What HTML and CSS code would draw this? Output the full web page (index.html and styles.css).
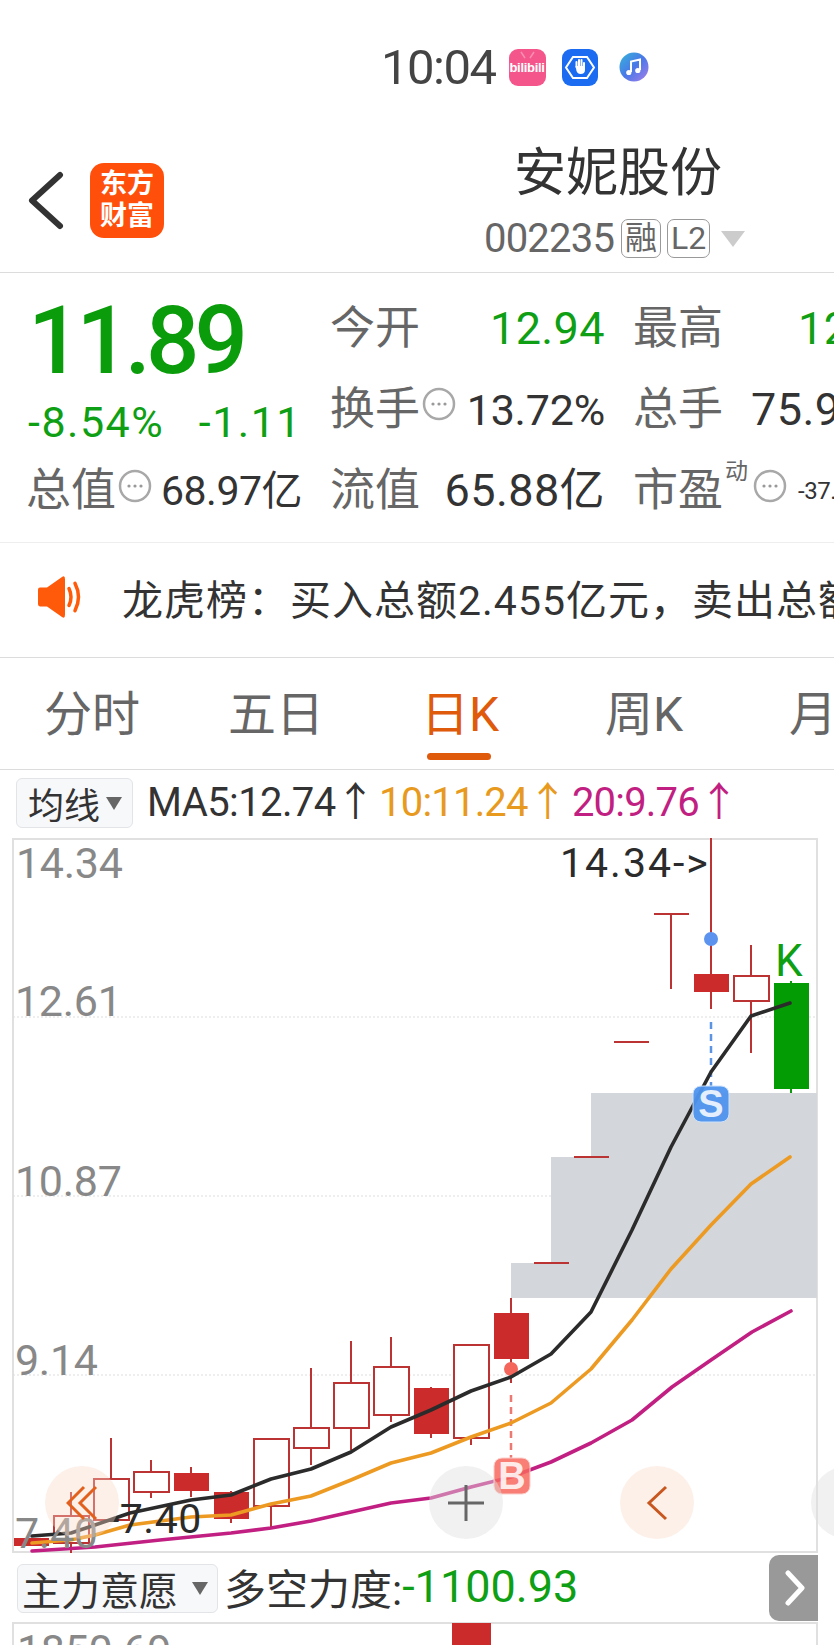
FILE: index.html
```html
<!DOCTYPE html>
<html lang="zh-CN">
<head>
  <meta charset="UTF-8" />
  <meta name="viewport" content="width=device-width, initial-scale=1.0"/>
  <title>安妮股份 002235</title>
  <link rel="stylesheet" href="styles.css">
</head>

<body>

  <svg class="defs" width="0" height="0">
    <symbol id="more" viewBox="0 0 34 34">
      <circle cx="17" cy="17" r="15" fill="none" stroke="#a8a8a8" stroke-width="2.5"/>
      <circle cx="11" cy="17" r="1.6" fill="#999"/>
      <circle cx="17" cy="17" r="1.6" fill="#999"/>
      <circle cx="23" cy="17" r="1.6" fill="#999"/>
    </symbol>
  </svg>

  <!-- status bar -->
  <div class="status">
    <span class="clock">10:04</span>
    <span class="app-bili">
      <svg class="bili-ears" width="37" height="12" viewBox="0 0 37 12"><path d="M12 3l4 6M25 3l-4 6" stroke="#f98fb0" stroke-width="1.5" fill="none"/></svg>
      <span class="bili-text">bilibili</span>
    </span>
    <svg class="app-hand" width="36" height="37" viewBox="0 0 36 37">
      <rect width="36" height="37" rx="9" fill="#1c6cf2"/>
      <path d="M11 8h14l7 10.500-7 10.500H11L4 18.500z" fill="none" stroke="#fff" stroke-width="2"/>
      <path d="M14.500 18v-5M17 17v-6M19.500 17v-6M22 18v-4" fill="none" stroke="#fff" stroke-width="2" stroke-linecap="round"/>
      <path d="M13.500 17h9.500v4q0 4-4.500 4-3 0-4-3z" fill="#fff"/>
    </svg>
    <svg class="app-music" width="30" height="30" viewBox="0 0 30 30">
      <defs>
        <linearGradient id="musicBg" x1="0" y1="0" x2="1" y2="1">
          <stop offset="0" stop-color="#35b6d8"/>
          <stop offset="0.5" stop-color="#4a78e8"/>
          <stop offset="1" stop-color="#a77fe8"/>
        </linearGradient>
      </defs>
      <circle cx="15" cy="15" r="14.500" fill="url(#musicBg)"/>
      <path d="M12 20V9.500l9-2V18" fill="none" stroke="#fff" stroke-width="2"/>
      <circle cx="9.800" cy="20.500" r="2.600" fill="#fff"/>
      <circle cx="18.800" cy="18.500" r="2.600" fill="#fff"/>
    </svg>
  </div>

  <!-- title -->
  <header class="title">
    <svg class="back" width="37" height="59" viewBox="0 0 37 59">
      <path d="M33 4L5 29.500 33 55" fill="none" stroke="#333" stroke-width="6" stroke-linecap="round" stroke-linejoin="round"/>
    </svg>
    <div class="logo">
      <span>东方</span>
      <span>财富</span>
    </div>
    <div class="stock">
      <div class="stock-name">安妮股份</div>
      <div class="stock-code">
        <span class="code">002235</span>
        <span class="tag">融</span>
        <span class="tag">L2</span>
        <span class="tag-arrow"></span>
      </div>
    </div>
  </header>

  <!-- quote -->
  <section class="quote">
    <div class="price-col">
      <div class="price">11.89</div>
      <div class="change">
        <span class="pct">-8.54%</span>
        <span class="diff">-1.11</span>
      </div>
      <div class="cell total">
        <span class="label">总值</span>
        <svg class="more"><use href="#more"/></svg>
        <span class="value v-total">68.97亿</span>
      </div>
    </div>
    <div class="stats">
      <div class="cell"><span class="label">今开</span><span class="value green">12.94</span></div>
      <div class="cell wide"><span class="label">最高</span><span class="value green high">12.94</span></div>
      <div class="cell"><span class="label">换手</span><svg class="more up"><use href="#more"/></svg><span class="value v-turn">13.72%</span></div>
      <div class="cell wide"><span class="label">总手</span><span class="value vol">75.97万</span></div>
      <div class="cell"><span class="label">流值</span><span class="value">65.88亿</span></div>
      <div class="cell wide">
        <span class="label">市盈</span><sup class="dyn">动</sup>
        <svg class="more"><use href="#more"/></svg>
        <span class="value pe">-37.65</span>
      </div>
    </div>
  </section>

  <!-- notice -->
  <div class="notice">
    <svg class="speaker" width="48" height="42" viewBox="0 0 48 40" preserveAspectRatio="none">
      <path d="M1 13q0-2 2-2h7L25 1q3-2 3 2v34q0 4-3 2L10 29H3q-2 0-2-2z" fill="#ff5a0a"/>
      <path d="M32 12q4 8 0 16M38 7q7 13 0 26" fill="none" stroke="#ff5a0a" stroke-width="3.500" stroke-linecap="round"/>
    </svg>
    <span class="notice-text">龙虎榜：买入总额2.455亿元，卖出总额2.101亿元</span>
  </div>

  <!-- period tabs -->
  <nav class="tabs">
    <span class="tab">分时</span>
    <span class="tab">五日</span>
    <span class="tab active">日K</span>
    <span class="tab">周K</span>
    <span class="tab">月K</span>
  </nav>

  <!-- moving averages -->
  <div class="ma-bar">
    <span class="picker">均线<i class="caret"></i></span>
    <span class="ma ma5">MA5:12.74↑</span>
    <span class="ma ma10">10:11.24↑</span>
    <span class="ma ma20">20:9.76↑</span>
  </div>

  <!-- main chart -->
  <div class="chart">
    <svg class="chart-svg" width="834" height="716" viewBox="0 838 834 716">
      <!-- frame -->
      <path class="frame" d="M13 839H817V1552H13z"/>
      <path class="grid" d="M13 1017H817M13 1196H817M13 1375H817"/>

      <!-- chip zone -->
      <path class="zone" d="M511 1298V1263H551V1157H591V1093H817V1298z"/>

      <!-- wicks -->
      <path class="wick" d="M71 1492V1553M111 1438V1478M151 1460V1498M191 1467V1497M231 1491V1523M271 1506V1527M311 1368V1465M351 1341V1450M391 1337V1422M431 1387V1438M471 1438V1445M511 1298V1383M671 914V989M711 838V1009M751 945V1053"/>
      <path class="wick" d="M534 1263H569M574 1157H609M614 1042H649M654 914H689"/>
      <path class="wick-down" d="M791 981V1093"/>

      <!-- candles -->
      <rect class="solid" x="14" y="1538" width="35" height="8"/>
      <rect class="hollow" x="54" y="1516" width="35" height="27"/>
      <rect class="hollow" x="94" y="1479" width="35" height="41"/>
      <rect class="hollow" x="134" y="1472" width="35" height="20"/>
      <rect class="solid" x="174" y="1473" width="35" height="18"/>
      <rect class="solid" x="214" y="1492" width="35" height="27"/>
      <rect class="hollow" x="254" y="1439" width="35" height="67"/>
      <rect class="hollow" x="294" y="1428" width="35" height="20"/>
      <rect class="hollow" x="334" y="1383" width="35" height="45"/>
      <rect class="hollow" x="374" y="1367" width="35" height="48"/>
      <rect class="solid" x="414" y="1388" width="35" height="46"/>
      <rect class="hollow" x="454" y="1345" width="35" height="93"/>
      <rect class="solid" x="494" y="1313" width="35" height="46"/>
      <rect class="solid" x="694" y="974" width="35" height="18"/>
      <rect class="hollow" x="734" y="976" width="35" height="25"/>
      <rect class="down" x="774" y="983" width="35" height="106"/>

      <!-- trade markers -->
      <path class="dash-sell" d="M711 1022V1086"/>
      <path class="dash-buy" d="M511 1395V1458"/>
      <circle cx="711" cy="939" r="7" fill="#5c93ee"/>
      <circle cx="511" cy="1369" r="7" fill="#f4665c"/>

      <!-- averages -->
      <polyline class="line-20" points="32,1551 95,1547 160,1540 231,1533 271,1528 311,1521 351,1512 391,1503 431,1498 471,1487 511,1477 551,1462 591,1443 632,1420 672,1387 711,1360 752,1332 791,1311"/>
      <polyline class="line-10" points="32,1543 70,1540 95,1535 130,1525 191,1517 231,1515 271,1504 311,1496 351,1480 391,1463 431,1453 471,1437 511,1423 551,1403 591,1369 632,1320 671,1269 711,1225 751,1184 790,1157"/>
      <polyline class="line-5" points="32,1536 71,1533 95,1525 130,1513 191,1500 231,1495 271,1479 311,1469 351,1452 391,1427 431,1410 471,1391 511,1377 551,1354 591,1312 632,1230 671,1147 711,1072 751,1016 790,1003"/>

      <!-- badges -->
      <rect class="badge-s" x="693" y="1086" width="36" height="36" rx="8"/>
      <text class="badge-text" x="711" y="1117">S</text>
      <rect class="badge-b" x="494" y="1458" width="36" height="36" rx="8"/>
      <text class="badge-text" x="512" y="1489">B</text>

      <!-- axis and notes -->
      <text class="axis" x="16" y="878">14.34</text>
      <text class="axis" x="15" y="1016">12.61</text>
      <text class="axis" x="15" y="1196">10.87</text>
      <text class="axis" x="15" y="1375">9.14</text>
      <text class="axis" x="15" y="1548">7.40</text>
      <text class="note" x="560" y="877">14.34-&gt;</text>
      <text class="note note-low" x="108" y="1533">-7.40</text>
      <text class="k-mark" x="775" y="976">K</text>
    </svg>

    <button class="round btn-first">
      <svg width="32" height="36" viewBox="0 0 32 36"><path d="M18 2L2 18l16 16M30 2L14 18l16 16" fill="none" stroke="#e2601e" stroke-width="3"/></svg>
    </button>
    <button class="round btn-plus">
      <svg width="38" height="38" viewBox="0 0 38 38"><path d="M19 1v36M1 19h36" stroke="#666" stroke-width="3"/></svg>
    </button>
    <button class="round btn-prev">
      <svg width="22" height="36" viewBox="0 0 22 36"><path d="M20 2L3 18l17 16" fill="none" stroke="#c8571f" stroke-width="3"/></svg>
    </button>
    <button class="round btn-next"></button>
  </div>

  <!-- sub indicator -->
  <div class="sub-bar">
    <span class="picker picker-wide">主力意愿<i class="caret caret-big"></i></span>
    <span class="sub-name">多空力度:</span>
    <span class="sub-value">-1100.93</span>
    <span class="sub-toggle">
      <svg width="20" height="36" viewBox="0 0 20 36"><path d="M3 3l14 15L3 33" fill="none" stroke="#fff" stroke-width="5" stroke-linecap="round" stroke-linejoin="round"/></svg>
    </span>
  </div>

  <div class="sub-chart">
    <svg width="834" height="23" viewBox="0 1622 834 23">
      <path class="frame" d="M13 1650V1623H817V1650"/>
      <rect class="solid" x="452" y="1623" width="39" height="23"/>
      <text class="axis" x="17" y="1665">1850.69</text>
    </svg>
  </div>

</body>
</html>
```

FILE: styles.css
```css
* {
  margin: 0;
  padding: 0;
  box-sizing: border-box;
}

body {
  width: 834px;
  height: 1645px;
  overflow: hidden;
  background: #fff;
  color: #333;
  font-family: Roboto, "Noto Sans CJK SC", sans-serif;
}

.defs {
  position: absolute;
}

/* status bar */
.status {
  height: 120px;
  padding: 14px 0 0 381px;
  display: flex;
  align-items: center;
}

.clock {
  font-size: 49px;
  letter-spacing: -1.5px;
  color: #444;
  margin-right: 13px;
}

.app-bili {
  width: 37px;
  height: 37px;
  border-radius: 9px;
  background: #f4568c;
  position: relative;
  display: flex;
  align-items: center;
  justify-content: center;
  margin-right: 16px;
  overflow: hidden;
}

.bili-ears {
  position: absolute;
  top: 0;
  left: 0;
}

.bili-text {
  color: #fff;
  font: bold 13px "Liberation Sans Narrow", "Liberation Sans", sans-serif;
  letter-spacing: -0.3px;
}

.app-hand {
  margin-right: 21px;
}

/* title */
.title {
  height: 153px;
  padding: 8px 0 0 27px;
  display: flex;
  align-items: center;
  border-bottom: 1px solid #dcdcdc;
}

.back {
  margin-right: 26px;
}

.logo {
  width: 74px;
  height: 75px;
  border-radius: 14px;
  background: #ff4f0a;
  color: #fff;
  font-size: 27px;
  font-weight: 700;
  line-height: 32px;
  display: flex;
  flex-direction: column;
  align-items: center;
  justify-content: center;
  margin-right: 320px;
}

.stock-name {
  padding-top: 6px;
  font-size: 52px;
  line-height: 56px;
  text-align: center;
  width: 268px;
  color: #333;
}

.stock-code {
  height: 44px;
  margin-top: 15px;
  display: flex;
  align-items: center;
}

.code {
  font-size: 40px;
  letter-spacing: -0.8px;
  color: #666;
  margin-right: 7px;
}

.tag {
  height: 39px;
  min-width: 40px;
  padding: 0 3px;
  border: 1px solid #999;
  border-radius: 7px;
  font-size: 32px;
  line-height: 37px;
  text-align: center;
  color: #666;
  margin-right: 6px;
}

.tag-arrow {
  width: 0;
  height: 0;
  margin-left: 5px;
  border-left: 12px solid transparent;
  border-right: 12px solid transparent;
  border-top: 16px solid #ccc;
}

/* quote */
.quote {
  height: 270px;
  display: flex;
  border-bottom: 1px solid #eee;
}

.price-col {
  width: 330px;
  padding: 23px 28px 0 28px;
}

.price {
  font-size: 94px;
  font-weight: 500;
  line-height: 90px;
  letter-spacing: -5px;
  color: #0a9c0a;
}

.change {
  height: 44px;
  margin-top: 14px;
  display: flex;
  justify-content: space-between;
  font-size: 43px;
  line-height: 44px;
  color: #0f9f14;
  letter-spacing: 1.5px;
}

.total {
  margin-top: 25px;
  margin-left: -2px;
}

.stats {
  display: grid;
  grid-template-columns: 303px minmax(0, 1fr);
  grid-auto-rows: 81px;
  padding-top: 15px;
  flex: 1;
}

.cell {
  display: flex;
  align-items: center;
  height: 44px;
  align-self: center;
  padding-right: 28px;
  white-space: nowrap;
}

.total.cell {
  padding-right: 0;
}

.cell.wide {
  padding-right: 0;
}

.label {
  font-size: 45px;
  line-height: 44px;
  color: #666;
}

.value {
  margin-left: auto;
  font-size: 45px;
  line-height: 44px;
  letter-spacing: 0.4px;
  color: #333;
}

.value.green {
  color: #0f9f14;
}

.value.high {
  margin-left: 75px;
}

.value.vol {
  margin-left: 28px;
}

.value.pe {
  margin-left: 11px;
  font-size: 24px;
  letter-spacing: -0.5px;
}

.v-total {
  font-size: 41px;
  letter-spacing: -0.5px;
}

.v-turn {
  font-size: 43px;
  letter-spacing: -0.2px;
}

.more {
  width: 34px;
  height: 34px;
  margin-left: 2px;
  margin-top: -10px;
  flex-shrink: 0;
}

.more.up {
  margin-top: -12px;
}

.dyn {
  font-size: 23px;
  line-height: 23px;
  color: #666;
  margin: -38px 3px 0 2px;
}

/* notice */
.notice {
  height: 115px;
  padding: 0 0 6px 37px;
  display: flex;
  align-items: center;
  border-bottom: 1px solid #dcdcdc;
  white-space: nowrap;
}

.speaker {
  flex-shrink: 0;
  margin-right: 37px;
}

.notice-text {
  font-size: 41px;
  letter-spacing: 1px;
  color: #333;
}

/* tabs */
.tabs {
  height: 112px;
  display: flex;
  border-bottom: 1px solid #dcdcdc;
}

.tab {
  flex: 0 0 184px;
  padding-top: 29px;
  text-align: center;
  font-size: 48px;
  line-height: 56px;
  color: #666;
  white-space: nowrap;
}

.tab.active {
  position: relative;
  color: #e05a0c;
}

.tab.active::after {
  content: "";
  position: absolute;
  left: 59px;
  bottom: 9px;
  width: 64px;
  height: 7px;
  border-radius: 4px;
  background: #e05a0c;
}

/* moving averages */
.ma-bar {
  height: 68px;
  padding: 8px 0 0 16px;
  display: flex;
  align-items: flex-start;
  white-space: nowrap;
}

.picker {
  width: 117px;
  height: 50px;
  padding-left: 11px;
  display: flex;
  align-items: center;
  border: 1px solid #e2e4e8;
  border-radius: 6px;
  background: #f7f8fa;
  font-size: 36px;
  color: #333;
}

.caret {
  margin-left: 6px;
  width: 0;
  height: 0;
  border-left: 8px solid transparent;
  border-right: 8px solid transparent;
  border-top: 13px solid #666;
}

.ma {
  font-size: 40px;
  line-height: 50px;
  letter-spacing: -0.8px;
}

.ma5 {
  margin-left: 14px;
  letter-spacing: -0.6px;
  color: #333;
}

.ma10 {
  margin-left: 4px;
  color: #e89a1e;
}

.ma20 {
  margin-left: 5px;
  color: #c21f82;
}

/* chart */
.chart {
  height: 716px;
  position: relative;
}

.chart-svg {
  display: block;
}

.frame {
  fill: none;
  stroke: #e0e0e0;
  stroke-width: 2;
}

.grid {
  fill: none;
  stroke: #ddd;
  stroke-width: 1;
  stroke-dasharray: 2 2;
}

.zone {
  fill: #d3d6da;
}

.wick {
  fill: none;
  stroke: #bb3333;
  stroke-width: 2;
}

.wick-down {
  fill: none;
  stroke: #0a9c0a;
  stroke-width: 2;
}

.solid {
  fill: #cc2b2b;
}

.hollow {
  fill: #fff;
  stroke: #bb3333;
  stroke-width: 2;
}

.down {
  fill: #049c04;
}

.dash-sell {
  stroke: #5c93e4;
  stroke-width: 2.5;
  stroke-dasharray: 7 5;
}

.dash-buy {
  stroke: #ec7a72;
  stroke-width: 2.5;
  stroke-dasharray: 7 5;
}

.line-5,
.line-10,
.line-20 {
  fill: none;
  stroke-width: 3.6;
  stroke-linejoin: round;
  stroke-linecap: round;
}

.line-5 {
  stroke: #2b2b2b;
}

.line-10 {
  stroke: #ec9a22;
}

.line-20 {
  stroke: #c21f82;
}

.badge-s {
  fill: #4e94ee;
  fill-opacity: 0.95;
  stroke: #cfe2fb;
}

.badge-b {
  fill: #f7675e;
  fill-opacity: 0.85;
  stroke: #fbd0cc;
}

.badge-text {
  fill: #fff;
  font: bold 38px "Liberation Sans", sans-serif;
  text-anchor: middle;
  fill-opacity: 0.85;
}

.axis {
  fill: #888;
  font-size: 43px;
  letter-spacing: -0.3px;
}

.note {
  fill: #2b2b2b;
  font-size: 41px;
  letter-spacing: 2px;
}

.note-low {
  letter-spacing: 0.5px;
}

.k-mark {
  fill: #0f9f14;
  font-size: 44px;
}

/* floating chart buttons */
.round {
  position: absolute;
  top: 628px;
  width: 74px;
  height: 73px;
  border: none;
  border-radius: 50%;
  display: flex;
  align-items: center;
  justify-content: center;
  background: rgba(250, 216, 198, 0.38);
}

.btn-first {
  left: 45px;
}

.btn-plus {
  left: 429px;
  background: rgba(225, 225, 225, 0.45);
}

.btn-prev {
  left: 620px;
}

.btn-next {
  left: 811px;
  background: rgba(225, 225, 225, 0.45);
}

/* sub indicator */
.sub-bar {
  height: 68px;
  padding-left: 17px;
  display: flex;
  align-items: center;
  white-space: nowrap;
}

.picker-wide {
  width: 201px;
  height: 49px;
  padding-left: 4px;
  font-size: 39px;
}

.caret-big {
  margin-left: 14px;
}

.sub-name {
  margin-left: 6px;
  margin-top: -4px;
  font-size: 42px;
  color: #333;
}

.sub-value {
  margin-top: -4px;
  font-size: 45px;
  color: #0f9f14;
}

.sub-toggle {
  width: 49px;
  height: 66px;
  margin: 0 16px 0 auto;
  padding-left: 16px;
  display: flex;
  align-items: center;
  border-radius: 10px 0 0 10px;
  background: #999;
}

.sub-chart svg {
  display: block;
}
```
